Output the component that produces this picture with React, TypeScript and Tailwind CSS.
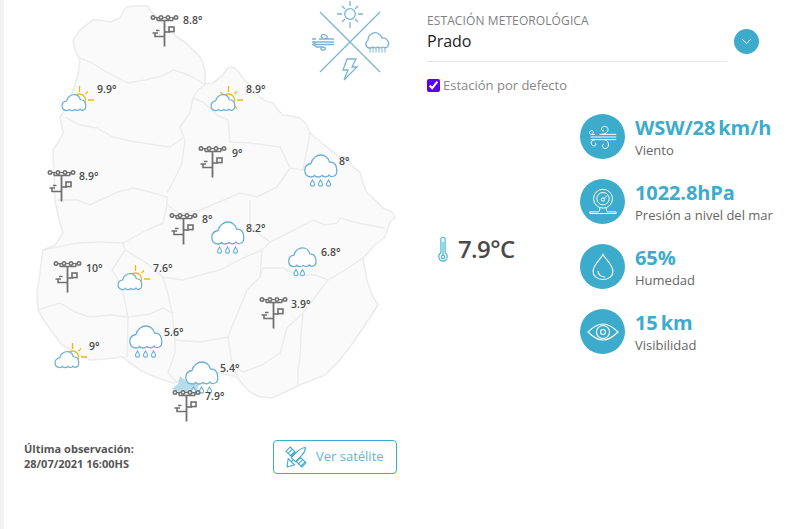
import React from "react";

const OUTLINE = "M127 7 L133 6 L147 6 L152 12 L160 20 L170 30 L177 37 L186 43 L193 50 L200 57 L203 63 L205 72 L205 84 L213 83 L222 76 L228 68 L233 67 L238 71 L242 77 L250 86 L260 97 L266 101 L273 103 L278 110 L283 115 L292 116 L300 118 L306 124 L310 133 L323 144 L337 155 L347 158 L353 167 L360 172 L363 183 L367 193 L375 200 L383 208 L392 212 L395 218 L390 222 L385 237 L375 245 L363 258 L365 270 L367 280 L372 295 L378 305 L365 325 L350 347 L338 362 L325 375 L300 385 L272 398 L260 397 L250 392 L243 385 L237 377 L220 373 L200 376 L173 383 L155 377 L140 370 L130 363 L123 357 L105 359 L90 360 L75 352 L62 345 L53 333 L45 322 L38 310 L37 293 L40 272 L43 250 L55 245 L63 233 L58 215 L55 200 L53 150 L58 143 L63 133 L60 117 L68 105 L75 85 L78 75 L80 60 L75 50 L73 40 L80 30 L93 20 L100 20 L110 22 L120 18 L124 10 Z";
const LINES = [
  "M80 58 L92 63 L100 68 L112 75 L127 83 L145 80 L162 76 L173 70 L183 73 L193 77 L205 85",
  "M205 85 L198 90 L193 98 L203 102 L217 115 L228 120 L230 142 L250 143 L280 147 L290 168 L303 170 L310 133",
  "M193 98 L190 113 L180 127 L185 140 L182 163 L175 178 L167 193",
  "M65 117 L80 125 L97 128 L113 137 L130 141 L143 143 L170 147 L183 138",
  "M57 200 L77 200 L90 205 L100 200 L118 192 L133 188 L150 192 L167 197 L167 205 L163 223 L147 230 L123 243 L100 242 L77 243 L43 250",
  "M123 243 L125 250 L112 270 L118 280 L123 293 L128 317 L127 357",
  "M38 310 L60 303 L75 312 L90 317 L110 315 L128 317 L150 314 L163 308 L172 313 L175 340 L175 353 L168 373 L177 382",
  "M125 250 L145 262 L163 277 L167 290 L172 313",
  "M163 277 L183 280 L200 275 L220 270 L243 258 L262 250 L270 242 L290 232 L313 220 L325 225 L337 223 L340 218 L362 224 L385 228",
  "M262 250 L260 277 L247 290 L238 312 L228 337 L232 363 L237 377",
  "M228 337 L200 342 L175 340",
  "M260 277 L263 268 L283 268 L297 275 L315 275 L328 280 L345 270 L363 258",
  "M328 280 L303 313 L287 328 L280 353 L262 365 L243 372 L232 365",
  "M303 313 L301 335 L300 357 L298 370 L298 385",
  "M290 168 L277 187 L257 197 L240 193 L217 203 L200 210 L180 214 L167 205",
  "M250 200 L250 227 L262 236 L270 242",
];

function MapBase() {
  return (
    <svg className="absolute left-0 top-0" width="420" height="420" viewBox="0 0 420 420" fill="none">
      <path d={OUTLINE} fill="#fafafa" stroke="#ececec" strokeWidth="1.6" strokeLinejoin="round" />
      {LINES.map((d) => (
        <path key={d} d={d} stroke="#ececec" strokeWidth="1.4" strokeLinejoin="round" />
      ))}
      <path d="M172 389 L178 384 L180 376 L187 382 L195 384 L200 382 L196 392 L180 392 Z" fill="#b5dcea" />
      <g stroke="#7ab4d4" strokeWidth="1.3" fill="none">
        <path d="M320 12 L380 72 M380 12 L320 72" />
        <circle cx="350" cy="14" r="5.3" />
        <path d="M350 1 V6 M350 22 V28 M337 14 H342 M358 14 H363 M342 6 L345 9 M358 6 L355 9 M342 22 L345 19 M358 22 L355 19" />
        <path d="M312 39 H316 M312 42 H334 M312 44.5 H334 M319 39 H334 M324 39 C331 38 325 33 322 35 C320 37 322 38 323 37 M316 47 H324 M317 47 C313 46 313 42 316 43 M322 47 C327 47 326 51 322 50 C320 49 321 48 322 48" />
        <path d="M369 48 C365 47 365 42 368 40 C368 34 376 30 380 35 C382 37 382 38 382 38 C387 37 390 43 388 46 C387 48 385 48 383 47 C381 48 379 48 378 47 C376 48 374 48 373 47 C372 48 370 48 369 48 Z" />
        <path d="M370 48 V52.5 M373 48 V52.5 M376 48 V52.5 M379 48 V52.5 M382 48 V52.5 M385 48 V52.5" strokeWidth="1" />
        <path d="M347 59 H356 L352 67 H357 L344 80 L348 70 H343 Z" />
      </g>
    </svg>
  );
}

function Station({ x, y }: { x: number; y: number }) {
  return (
    <svg className="absolute" style={{ left: x, top: y }} width="30" height="36" viewBox="0 0 30 36" fill="none" stroke="#707070" strokeWidth="1.6">
      <path d="M4 3.5 H26" strokeWidth="1" />
      <circle cx="3" cy="3.5" r="1.7" fill="#fff" />
      <circle cx="11" cy="3.5" r="1.7" fill="#fff" />
      <circle cx="18" cy="3.5" r="1.7" fill="#fff" />
      <circle cx="26" cy="3.5" r="1.7" fill="#fff" />
      <path d="M7 6.5 H23 M7 6.5 V4 M23 6.5 V4" />
      <path d="M14.5 6 V32.5" strokeWidth="1.8" />
      <rect x="19" y="13" width="5" height="4.6" />
      <path d="M14.5 18 H20" />
      <path d="M14.5 22.5 H5 V19" />
      <path d="M2.5 19 H8 M6 16.5 H9.5" strokeWidth="1.3" />
    </svg>
  );
}

const CLOUD = "M7 23 C2 23 .8 19 .8 16 C1 12 4 10 7 9.5 C8 4 13 1 17 1 C21 1 24.5 4 25.5 8 C29 8 32 10 32.5 14 C33 17 33 21 30 22 C28 23 26 22.5 25 21 C24 23 20 23.5 18 21.5 C16 23.5 12 23.5 10.5 21.5 C10 22.5 8.5 23 7 23 Z";

function Rain({ x, y, w = 34, drops = [8.5, 16.5, 24.5] }: { x: number; y: number; w?: number; drops?: number[] }) {
  const s = w / 34;
  const top = 23 * s + 3;
  return (
    <svg className="absolute" style={{ left: x, top: y }} width={w} height={36} viewBox={`0 0 ${w} 36`} fill="none">
      <g transform={`scale(${s})`}>
        <path d={CLOUD} fill="#fff" stroke="#6cb0d8" strokeWidth={1.3 / s} />
      </g>
      {drops.map((d) => (
        <path
          key={d}
          d={`M${d} ${top} C${d - 1} ${top + 2} ${d - 2} ${top + 3} ${d - 2} ${top + 4.2} C${d - 2} ${top + 6.8} ${d + 2} ${top + 6.8} ${d + 2} ${top + 4.2} C${d + 2} ${top + 3} ${d + 1} ${top + 2} ${d} ${top} Z`}
          stroke="#6cb0d8"
          strokeWidth="1.1"
          fill="#fff"
        />
      ))}
    </svg>
  );
}

function SunCloud({ x, y, full = false }: { x: number; y: number; full?: boolean }) {
  return (
    <svg className="absolute" style={{ left: x, top: y }} width="36" height="30" viewBox="0 0 36 30" fill="none">
      <g stroke="#f2b90f" strokeWidth="1.3">
        <circle cx="18.5" cy="15" r="6" fill="#fff" />
        <path d="M18.5 1 V7 M24.5 9 L27 6.5 M27 15 H33" />
        {full && <path d="M10.5 7 L13.5 10 M24.5 21 L27 23.5" />}
      </g>
      <g transform="translate(0.5 9) scale(0.74 0.72)">
        <path d={CLOUD} fill="#fff" stroke="#6cb0d8" strokeWidth="1.7" />
      </g>
    </svg>
  );
}

function Temp({ x, y, t }: { x: number; y: number; t: string }) {
  return (
    <span
      className="absolute whitespace-nowrap font-['Open_Sans',sans-serif] text-[10.5px] font-semibold leading-none text-[#4a4a4a]"
      style={{ left: x, top: y - 5 }}
    >
      {t}
    </span>
  );
}

function WindIcon() {
  return (
    <svg width="30" height="30" viewBox="0 0 34 34" fill="none" stroke="#fff" strokeWidth="1.1">
      <path d="M3 14 H8 M3 17 H32 M3 20 H32 M13 14 H32" />
      <path d="M16 14 C25 13 24 4 18 5 C14 6 15 11 18 10" />
      <path d="M3 14 C0 12 3 9 5 10 C7 11 6 13 5 13" />
      <path d="M8 20 C3 20 2 26 6 27 C9 28 10 24 8 24" />
      <path d="M18 20 C24 20 25 29 20 30 C16 30 15 26 18 25" />
    </svg>
  );
}
function PressureIcon() {
  return (
    <svg width="28" height="28" viewBox="0 0 34 34" fill="none" stroke="#fff" strokeWidth="1.2">
      <circle cx="17" cy="13" r="11.5" />
      <circle cx="17" cy="13" r="7.5" />
      <circle cx="17" cy="14" r="2" />
      <path d="M18.5 12.5 L22 9 M13 24 C13 28 13 29 10 29 H1 V31 H33 V29 H24 C21 29 21 28 21 24" />
    </svg>
  );
}
function DropIcon() {
  return (
    <svg width="34" height="34" viewBox="0 0 34 34" fill="none" stroke="#fff" strokeWidth="1.1">
      <path d="M17 4.5 C14 10 7 15 7 21.5 C7 26 11 29.5 17 29.5 C23 29.5 27 26 27 21.5 C27 15 20 10 17 4.5 Z" />
      <path d="M12 21 C12 24.5 15 27 19 27" />
    </svg>
  );
}
function EyeIcon() {
  return (
    <svg width="34" height="34" viewBox="0 0 34 34" fill="none" stroke="#fff" strokeWidth="1.1">
      <path d="M2 17 C8 11 13 9 17 9 C21 9 26 11 32 17 C26 23 21 25 17 25 C13 25 8 23 2 17 Z" />
      <circle cx="17" cy="17" r="6.5" />
      <circle cx="17" cy="17" r="2.5" />
    </svg>
  );
}

function Stat({ icon, value, label }: { icon: React.ReactNode; value: string; label: string }) {
  return (
    <div className="flex items-center gap-[10px]">
      <div className="flex h-[45px] w-[45px] shrink-0 items-center justify-center rounded-full bg-[#3cabcc]">{icon}</div>
      <div>
        <div className="whitespace-nowrap pt-[1px] text-[20px] font-bold leading-[26px] tracking-[-0.1px] text-[#3cabcc] [word-spacing:-2px]">{value}</div>
        <div className="whitespace-nowrap text-[13px] leading-[18px] text-[#666666]">{label}</div>
      </div>
    </div>
  );
}

export default function App() {
  return (
    <div className="flex h-[529px] w-[790px] overflow-hidden border-l-4 border-[#f3f3f3] bg-white font-['Open_Sans',sans-serif]">
      <div className="w-[423px] shrink-0">
        <div className="relative -ml-1 h-[436px] w-[423px]">
          <MapBase />
          <Station x={150} y={14} />
          <SunCloud x={61} y={85} />
          <SunCloud x={210} y={85} full />
          <Station x={47} y={169} />
          <Station x={198} y={145} />
          <Rain x={304} y={154} />
          <Station x={169} y={212} />
          <Rain x={211} y={221} />
          <Rain x={288} y={247} w={29} drops={[8, 14.5]} />
          <Station x={53} y={260} />
          <SunCloud x={117} y={264} />
          <Station x={259} y={296} />
          <Rain x={129} y={325} />
          <SunCloud x={54} y={342} />
          <Rain x={185} y={361} />
          <Station x={172} y={389} />
          <Temp x={183} y={20} t="8.8°" />
          <Temp x={97} y={89} t="9.9°" />
          <Temp x={246} y={89} t="8.9°" />
          <Temp x={232} y={153} t="9°" />
          <Temp x={339} y={161} t="8°" />
          <Temp x={79} y={176} t="8.9°" />
          <Temp x={202} y={219} t="8°" />
          <Temp x={246} y={228} t="8.2°" />
          <Temp x={321} y={252} t="6.8°" />
          <Temp x={86} y={268} t="10°" />
          <Temp x={153} y={268} t="7.6°" />
          <Temp x={291} y={304} t="3.9°" />
          <Temp x={164} y={332} t="5.6°" />
          <Temp x={89} y={346} t="9°" />
          <Temp x={220} y={368} t="5.4°" />
          <Temp x={205} y={396} t="7.9°" />
        </div>
        <div className="flex items-center justify-between pl-5 pr-[30px] pt-[4px]">
          <div className="-mt-[2px] text-[11px] font-bold leading-[15px] text-[#555555]">
            <div>Última observación:</div>
            <div>28/07/2021 16:00HS</div>
          </div>
          <button className="flex h-[34px] w-[124px] items-center gap-[9px] rounded border border-[#3cabcc] pl-[11px] text-[13px] text-[#5bb8d4]">
            <svg width="22" height="22" viewBox="0 0 21 21" fill="#fff" stroke="#3cabcc" strokeWidth="1">
              <path d="M6 11 L12 5 C14 3 18 1.5 19.5 1.5 C19.5 3.5 18 7 16 9 L10 15 Z" />
              <path d="M1 5 L5 1 L10 6 L6 10 Z M3 7 L7 3 M5.5 9 L9 5.5" />
              <path d="M11 15 L15 11 L20 16 L16 20 Z M13 17 L17 13 M15.5 19 L19 15.5" />
              <path d="M3 12 L9 18 L2 20 Z M6 15 L8 13" />
            </svg>
            <span>Ver satélite</span>
          </button>
        </div>
      </div>
      <div className="flex-1">
        <div className="flex items-start">
          <div className="w-[300px] pt-[13px]">
            <div className="text-[12px] leading-[16px] tracking-[0.1px] text-[#808080]">ESTACIÓN METEOROLÓGICA</div>
            <div className="flex h-[33px] items-center border-b border-[#e5e5e5] pb-[8px] text-[16px] text-[#222222]">Prado</div>
          </div>
          <div className="ml-[7px] mt-[29px] flex h-[25px] w-[25px] items-center justify-center rounded-full bg-[#3cabcc]">
            <svg width="11" height="7" viewBox="0 0 11 7" fill="none" stroke="#fff" strokeWidth="1">
              <path d="M1 1 L5.5 5.5 L10 1" />
            </svg>
          </div>
        </div>
        <label className="mt-[13px] flex items-center gap-[3px] text-[13px] leading-[20px] text-[#888888]">
          <input type="checkbox" defaultChecked className="m-0 h-[13px] w-[13px] accent-[#5a00f0]" />
          <span>Estación por defecto</span>
        </label>
        <div className="flex items-center pt-[19px]">
          <div className="flex w-[153px] items-center gap-[10px] pt-[29px]">
            <svg className="ml-[11px]" width="10" height="28" viewBox="0 0 12 31" fill="none" stroke="#3cb6d8" strokeWidth="1.4">
              <path d="M3.5 20 V3.5 C3.5 0.7 8.5 0.7 8.5 3.5 V20 C13 23 11 30 6 30 C1 30 -1 23 3.5 20 Z" />
              <circle cx="6" cy="25" r="2" />
              <path d="M6 23 V7" />
            </svg>
            <span className="text-[24px] font-semibold leading-none tracking-[-0.6px] text-[#4a4a4a]">7.9°C</span>
          </div>
          <div className="flex flex-col gap-5">
            <Stat icon={<WindIcon />} value="WSW/28 km/h" label="Viento" />
            <Stat icon={<PressureIcon />} value="1022.8hPa" label="Presión a nivel del mar" />
            <Stat icon={<DropIcon />} value="65%" label="Humedad" />
            <Stat icon={<EyeIcon />} value="15 km" label="Visibilidad" />
          </div>
        </div>
      </div>
    </div>
  );
}
